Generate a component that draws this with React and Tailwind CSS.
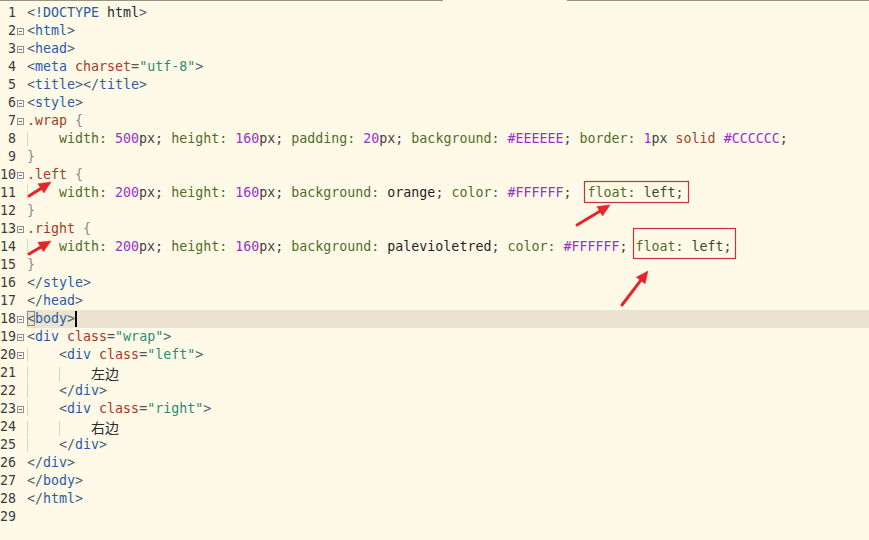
const B = 'text-[#4a5a70]';
const TG = 'text-[#2b5ca5]';
const AN = 'text-[#a33c22]';
const EQ = 'text-[#555555]';
const AV = 'text-[#2e8a78]';
const SEL = 'text-[#a33c22]';
const BR = 'text-[#8c8c8c]';
const PR = 'text-[#4f6e2a]';
const NUM = 'text-[#9633c8]';
const PX = 'text-[#3f3f3f]';
const VAL = 'text-[#1f1f1f]';
const KW = 'text-[#a0452a]';
const LV = 'text-[#3b4a2a]';
const TX = 'text-[#2a2a2a]';

// un segment = [classe, texte]
const tag = (name, close) => [[B, close ? '</' : '<'], [TG, name], [B, '>']];
const divOpen = (cls) => [[B, '<'], [TG, 'div'], [TX, ' '], [AN, 'class'], [EQ, '='], [AV, `"${cls}"`], [B, '>']];

const lines = [
  { code: [[B, '<'], [TG, '!DOCTYPE'], [TX, ' html'], [B, '>']] },
  { fold: true, code: tag('html') },
  { fold: true, code: tag('head') },
  { code: [[B, '<'], [TG, 'meta'], [TX, ' '], [AN, 'charset'], [EQ, '='], [AV, '"utf-8"'], [B, '>']] },
  { code: [...tag('title'), ...tag('title', true)] },
  { fold: true, code: tag('style') },
  { fold: true, code: [[SEL, '.wrap'], [BR, ' {']] },
  {
    guides: 1,
    code: [
      [PR, 'width: '], [NUM, '500'], [PX, 'px; '],
      [PR, 'height: '], [NUM, '160'], [PX, 'px; '],
      [PR, 'padding: '], [NUM, '20'], [PX, 'px; '],
      [PR, 'background: '], [NUM, '#EEEEEE'], [PX, '; '],
      [PR, 'border: '], [NUM, '1'], [PX, 'px '], [KW, 'solid '], [NUM, '#CCCCCC'], [PX, ';'],
    ],
  },
  { code: [[BR, '}']] },
  { fold: true, code: [[SEL, '.left'], [BR, ' {']] },
  {
    guides: 1,
    code: [
      [PR, 'width: '], [NUM, '200'], [PX, 'px; '],
      [PR, 'height: '], [NUM, '160'], [PX, 'px; '],
      [PR, 'background: '], [VAL, 'orange'], [PX, '; '],
      [PR, 'color: '], [NUM, '#FFFFFF'], [PX, ';  '],
      [PR, 'float: '], [LV, 'left;'],
    ],
  },
  { code: [[BR, '}']] },
  { fold: true, code: [[SEL, '.right'], [BR, ' {']] },
  {
    guides: 1,
    code: [
      [PR, 'width: '], [NUM, '200'], [PX, 'px; '],
      [PR, 'height: '], [NUM, '160'], [PX, 'px; '],
      [PR, 'background: '], [VAL, 'palevioletred'], [PX, '; '],
      [PR, 'color: '], [NUM, '#FFFFFF'], [PX, '; '],
      [PR, 'float: '], [LV, 'left;'],
    ],
  },
  { code: [[BR, '}']] },
  { code: tag('style', true) },
  { code: tag('head', true) },
  { fold: true, body: true },
  { fold: true, code: divOpen('wrap') },
  { fold: true, guides: 1, code: divOpen('left') },
  { guides: 2, cjk: '左边' },
  { guides: 1, code: tag('div', true) },
  { fold: true, guides: 1, code: divOpen('right') },
  { guides: 2, cjk: '右边' },
  { guides: 1, code: tag('div', true) },
  { code: tag('div', true) },
  { code: tag('body', true) },
  { code: tag('html', true) },
  { code: [] },
];

function Guide() {
  return <span className="shadow-[inset_1px_0_0_#ddd5c4]">{'    '}</span>;
}

function FoldMark() {
  return (
    <span className="relative block w-[7px] h-[7px] border border-[#8f8f8f] bg-[#fffdf4]">
      <span className="absolute left-[1px] top-[2px] w-[3px] h-px bg-[#6a6a6a]" />
    </span>
  );
}

function Row({ n, line }) {
  const guides = [];
  for (let i = 0; i < (line.guides || 0); i++) guides.push(<Guide key={i} />);

  return (
    <div className="flex h-[18px] leading-[18px]">
      <div className="flex w-[27px] shrink-0">
        <span className="w-[16px] text-right text-[#3c3c3c]">{n}</span>
        <span className="flex items-center pl-px">{line.fold && <FoldMark />}</span>
      </div>
      <div className={`flex-1 whitespace-pre ${line.body ? 'bg-[#ebe3cf]' : ''}`}>
        {guides}
        {line.code && line.code.map(([c, t], i) => <span key={i} className={c}>{t}</span>)}
        {line.cjk && (
          <span className={`${TX} text-[14px] font-['Noto_Sans_CJK_SC',sans-serif]`}>{line.cjk}</span>
        )}
        {line.body && (
          <>
            <span className={`${B} outline outline-1 outline-[#8a8a8a] -outline-offset-1`}>{'<'}</span>
            <span className={TG}>body</span>
            <span className={B}>{'>'}</span>
            <span className="inline-block w-[2px] h-[16px] bg-black align-middle" />
          </>
        )}
      </div>
    </div>
  );
}

function Arrow({ x1, y1, x2, y2 }) {
  const dx = x2 - x1;
  const dy = y2 - y1;
  const len = Math.hypot(dx, dy);
  const ux = dx / len;
  const uy = dy / len;
  const hl = 12;
  const hw = 5.5;
  const bx = x2 - ux * hl;
  const by = y2 - uy * hl;
  const pts = `${x2},${y2} ${bx - uy * hw},${by + ux * hw} ${bx + uy * hw},${by - ux * hw}`;
  return (
    <g fill="#e5252a" stroke="#e5252a">
      <line x1={x1} y1={y1} x2={bx + ux * 2} y2={by + uy * 2} strokeWidth="3" strokeLinecap="round" />
      <polygon points={pts} strokeWidth="0.5" strokeLinejoin="round" />
    </g>
  );
}

export default function App() {
  return (
    <div className="relative w-[869px] h-[540px] overflow-hidden bg-[#fffae8] font-['DejaVu_Sans_Mono',monospace] text-[13.3px]">
      <div className="flex h-px">
        <div className="w-[443px] bg-[#9a9385]" />
        <div className="w-[124px]" />
        <div className="flex-1 bg-[#9a9385]" />
      </div>
      <div className="flex flex-col pt-[3px]">
        {lines.map((line, i) => (
          <Row key={i} n={i + 1} line={line} />
        ))}
      </div>

      <svg className="absolute inset-0 pointer-events-none" width="869" height="540">
        <rect x="584.5" y="181.5" width="104" height="21" fill="none" stroke="#c6343b" strokeWidth="1.2" />
        <rect x="633.5" y="228.5" width="102" height="30" fill="none" stroke="#c6343b" strokeWidth="1.2" />
        <Arrow x1={29} y1={196} x2={51} y2={182} />
        <Arrow x1={29} y1={254} x2={51} y2={241} />
        <Arrow x1={577} y1={225} x2={610} y2={205} />
        <Arrow x1={622} y1={305} x2={648} y2={271} />
      </svg>
    </div>
  );
}
